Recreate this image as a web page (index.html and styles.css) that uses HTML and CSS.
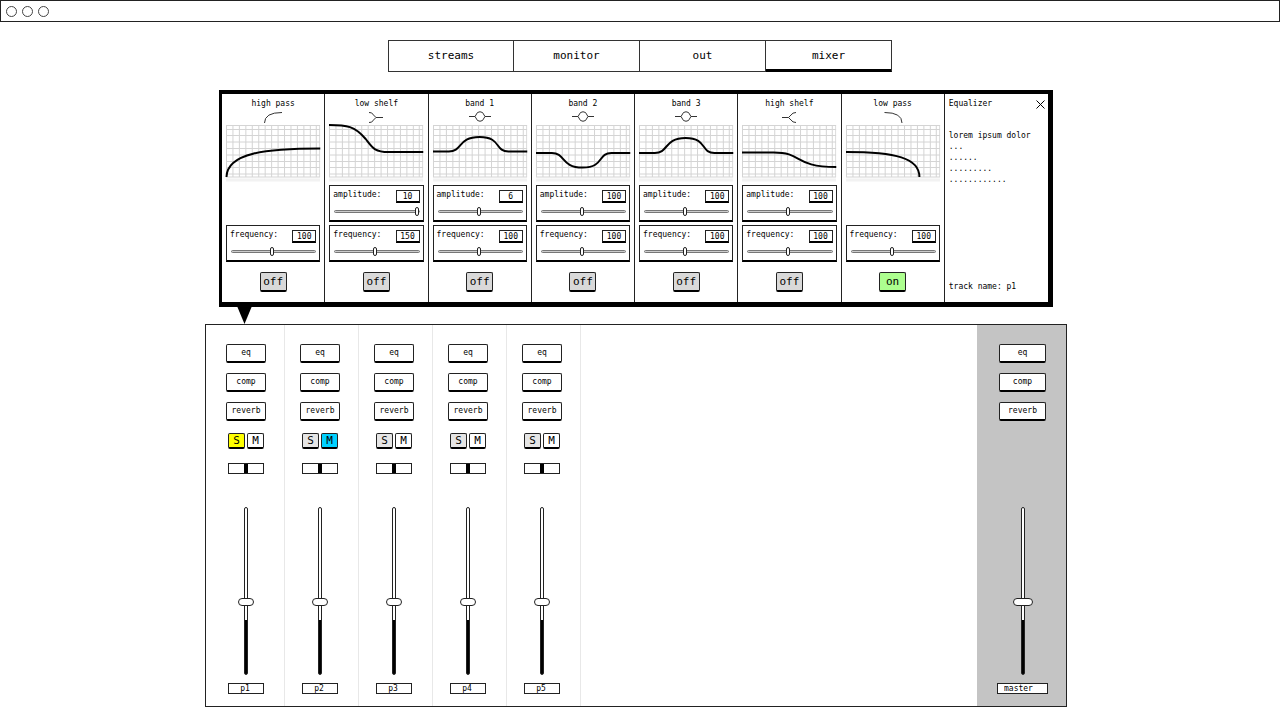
FILE: index.html
```html
<!DOCTYPE html>
<html lang="en">
<head>
<meta charset="utf-8">
<meta name="viewport" content="width=device-width, initial-scale=1">
<title>Mixer</title>
<link rel="stylesheet" href="styles.css">
</head>
<body>
<svg class="defs" aria-hidden="true">
  <symbol id="grid" viewBox="0 0 95 57" preserveAspectRatio="none">
    <path d="M0 55H95" stroke="#f2f2f2" stroke-width="3"/>
    <path d="M.5 0V52M7 0V52M13.5 0V52M20 0V52M26.500 0V52M33 0V52M39.500 0V52M46 0V52M52.500 0V52M59 0V52M65.500 0V52M72 0V52M78.500 0V52M85 0V52M91 0V52M94.500 0V52M0 .5H95M0 4.500H95M0 10.500H95M0 17H95M0 23.500H95M0 30H95M0 36.500H95M0 42.500H95M0 49H95M0 52H95" fill="none" stroke="#d4d4d4"/>
  </symbol>
  <symbol id="bell" viewBox="0 0 24 13">
    <path d="M1 5.500H7M17 5.500H23M7 5.500L9.500 1.500Q12 0 14.500 1.500L17 5.500L14.500 9.500Q12 11 9.500 9.500Z" fill="none" stroke="#333"/>
  </symbol>
</svg>

<header class="titlebar">
  <button class="dot" aria-label="Close window"></button>
  <button class="dot" aria-label="Minimize window"></button>
  <button class="dot" aria-label="Maximize window"></button>
</header>

<nav class="tabs">
  <a class="tab" href="#streams">streams</a>
  <a class="tab" href="#monitor">monitor</a>
  <a class="tab" href="#out">out</a>
  <a class="tab tab-active" href="#mixer" aria-current="page">mixer</a>
</nav>

<main class="workspace">
  <section class="equalizer" aria-label="Equalizer">
    <div class="band">
      <h2 class="band-name">high pass</h2>
      <svg class="band-icon" viewBox="0 0 24 13"><path d="M3.500 12Q3.500 1.500 21 1.500" fill="none" stroke="#333"/></svg>
      <svg class="graph" viewBox="0 0 95 57" preserveAspectRatio="none"><use href="#grid"/><path class="curve" d="M.5 52C1 28 40 23.500 95 23.500"/></svg>
      <div class="controls">
        <div class="param"><label class="param-name" for="f1">frequency:</label><input class="value" aria-label="frequency value" value="100"><input class="slider" id="f1" type="range" value="48"></div>
      </div>
      <button class="power">off</button>
    </div>
    <div class="band">
      <h2 class="band-name">low shelf</h2>
      <svg class="band-icon" viewBox="0 0 24 13"><path d="M5 1.500Q8 1 9.500 4L12 6.500H19M5 11.500Q8 12 9.500 9L12 6.500" fill="none" stroke="#333"/></svg>
      <svg class="graph" viewBox="0 0 95 57" preserveAspectRatio="none"><use href="#grid"/><path class="curve" d="M0 0C18 0 26 1 37 14C44 23 46 27 60 27H95"/></svg>
      <div class="controls">
        <div class="param"><label class="param-name" for="a2">amplitude:</label><input class="value" aria-label="amplitude value" value="10"><input class="slider" id="a2" type="range" value="100"></div>
        <div class="param"><label class="param-name" for="f2">frequency:</label><input class="value" aria-label="frequency value" value="150"><input class="slider" id="f2" type="range" value="48"></div>
      </div>
      <button class="power">off</button>
    </div>
    <div class="band">
      <h2 class="band-name">band 1</h2>
      <svg class="band-icon"><use href="#bell"/></svg>
      <svg class="graph" viewBox="0 0 95 57" preserveAspectRatio="none"><use href="#grid"/><path class="curve" d="M0 26.500H16C30 26.500 25 12 47 12S62 26.500 76 26.500H95"/></svg>
      <div class="controls">
        <div class="param"><label class="param-name" for="a3">amplitude:</label><input class="value" aria-label="amplitude value" value="6"><input class="slider" id="a3" type="range" value="48"></div>
        <div class="param"><label class="param-name" for="f3">frequency:</label><input class="value" aria-label="frequency value" value="100"><input class="slider" id="f3" type="range" value="48"></div>
      </div>
      <button class="power">off</button>
    </div>
    <div class="band">
      <h2 class="band-name">band 2</h2>
      <svg class="band-icon"><use href="#bell"/></svg>
      <svg class="graph" viewBox="0 0 95 57" preserveAspectRatio="none"><use href="#grid"/><path class="curve" d="M0 28H16C30 28 25 42.500 47 42.500S62 28 76 28H95"/></svg>
      <div class="controls">
        <div class="param"><label class="param-name" for="a4">amplitude:</label><input class="value" aria-label="amplitude value" value="100"><input class="slider" id="a4" type="range" value="48"></div>
        <div class="param"><label class="param-name" for="f4">frequency:</label><input class="value" aria-label="frequency value" value="100"><input class="slider" id="f4" type="range" value="48"></div>
      </div>
      <button class="power">off</button>
    </div>
    <div class="band">
      <h2 class="band-name">band 3</h2>
      <svg class="band-icon"><use href="#bell"/></svg>
      <svg class="graph" viewBox="0 0 95 57" preserveAspectRatio="none"><use href="#grid"/><path class="curve" d="M0 28H16C30 28 25 13 47 13S62 28 76 28H95"/></svg>
      <div class="controls">
        <div class="param"><label class="param-name" for="a5">amplitude:</label><input class="value" aria-label="amplitude value" value="100"><input class="slider" id="a5" type="range" value="48"></div>
        <div class="param"><label class="param-name" for="f5">frequency:</label><input class="value" aria-label="frequency value" value="100"><input class="slider" id="f5" type="range" value="48"></div>
      </div>
      <button class="power">off</button>
    </div>
    <div class="band">
      <h2 class="band-name">high shelf</h2>
      <svg class="band-icon" viewBox="0 0 24 13"><path d="M5 6.500H11.500L14 4Q15.500 1.500 19 1.500M11.500 6.500L14 9Q15.500 11.500 19 11.500" fill="none" stroke="#333"/></svg>
      <svg class="graph" viewBox="0 0 95 57" preserveAspectRatio="none"><use href="#grid"/><path class="curve" d="M0 27.500H32C62 27.500 52 42 95 42"/></svg>
      <div class="controls">
        <div class="param"><label class="param-name" for="a6">amplitude:</label><input class="value" aria-label="amplitude value" value="100"><input class="slider" id="a6" type="range" value="48"></div>
        <div class="param"><label class="param-name" for="f6">frequency:</label><input class="value" aria-label="frequency value" value="100"><input class="slider" id="f6" type="range" value="48"></div>
      </div>
      <button class="power">off</button>
    </div>
    <div class="band">
      <h2 class="band-name">low pass</h2>
      <svg class="band-icon" viewBox="0 0 24 13"><path d="M3.500 1.500Q21 1.500 21 12" fill="none" stroke="#333"/></svg>
      <svg class="graph" viewBox="0 0 95 57" preserveAspectRatio="none"><use href="#grid"/><path class="curve" d="M0 27C50 27 74 33 74 52"/></svg>
      <div class="controls">
        <div class="param"><label class="param-name" for="f7">frequency:</label><input class="value" aria-label="frequency value" value="100"><input class="slider" id="f7" type="range" value="48"></div>
      </div>
      <button class="power power-on">on</button>
    </div>
    <div class="info">
      <div class="info-head">
        <h2 class="info-title">Equalizer</h2>
        <button class="close" aria-label="Close equalizer"><svg class="close-icon" viewBox="0 0 9 9"><path d="M.5 .5L8.500 8.500M8.500 .5L.5 8.500" stroke="#000" fill="none"/></svg></button>
      </div>
      <p class="info-text">lorem ipsum dolor<br>...<br>......<br>.........<br>............</p>
      <p class="info-track">track name: p1</p>
    </div>
    <svg class="pointer" viewBox="0 0 15 18" aria-hidden="true"><path d="M0 0H15L7.500 18Z"/></svg>
  </section>

  <section class="mixer" id="mixer" aria-label="Mixer">
    <div class="channels">
      <div class="channel">
        <div class="effects"><button class="effect">eq</button><button class="effect">comp</button><button class="effect">reverb</button></div>
        <div class="switches"><button class="switch switch-solo-on">S</button><button class="switch">M</button></div>
        <input class="pan" type="range" aria-label="p1 pan">
        <input class="fader" type="range" value="43" aria-label="p1 volume">
        <input class="name" aria-label="Track name" value="p1">
      </div>
      <div class="channel">
        <div class="effects"><button class="effect">eq</button><button class="effect">comp</button><button class="effect">reverb</button></div>
        <div class="switches"><button class="switch switch-solo">S</button><button class="switch switch-mute-on">M</button></div>
        <input class="pan" type="range" aria-label="p2 pan">
        <input class="fader" type="range" value="43" aria-label="p2 volume">
        <input class="name" aria-label="Track name" value="p2">
      </div>
      <div class="channel">
        <div class="effects"><button class="effect">eq</button><button class="effect">comp</button><button class="effect">reverb</button></div>
        <div class="switches"><button class="switch switch-solo">S</button><button class="switch">M</button></div>
        <input class="pan" type="range" aria-label="p3 pan">
        <input class="fader" type="range" value="43" aria-label="p3 volume">
        <input class="name" aria-label="Track name" value="p3">
      </div>
      <div class="channel">
        <div class="effects"><button class="effect">eq</button><button class="effect">comp</button><button class="effect">reverb</button></div>
        <div class="switches"><button class="switch switch-solo">S</button><button class="switch">M</button></div>
        <input class="pan" type="range" aria-label="p4 pan">
        <input class="fader" type="range" value="43" aria-label="p4 volume">
        <input class="name" aria-label="Track name" value="p4">
      </div>
      <div class="channel">
        <div class="effects"><button class="effect">eq</button><button class="effect">comp</button><button class="effect">reverb</button></div>
        <div class="switches"><button class="switch switch-solo">S</button><button class="switch">M</button></div>
        <input class="pan" type="range" aria-label="p5 pan">
        <input class="fader" type="range" value="43" aria-label="p5 volume">
        <input class="name" aria-label="Track name" value="p5">
      </div>
    </div>
    <div class="channel master">
      <div class="effects"><button class="effect">eq</button><button class="effect">comp</button><button class="effect">reverb</button></div>
      <input class="fader" type="range" value="43" aria-label="master volume">
      <input class="name" aria-label="Track name" value="master">
    </div>
  </section>
</main>
</body>
</html>
```
FILE: styles.css
```css
* {
  box-sizing: border-box;
}

body {
  margin: 0;
  background: #fff;
  color: #000;
  font: 8px/12px "DejaVu Sans Mono", monospace;
}

button,
input {
  margin: 0;
  padding: 0;
  font: inherit;
  color: inherit;
  background: #fff;
  border: 1px solid #222;
  border-radius: 0;
}

h2,
p {
  margin: 0;
  font: inherit;
}

.defs {
  display: none;
}

/* Window title bar */

.titlebar {
  display: flex;
  align-items: center;
  gap: 5px;
  height: 22px;
  padding: 0 5px;
  border: 1px solid #222;
}

.dot {
  width: 11px;
  height: 11px;
  border-color: #444;
  border-radius: 50%;
}

/* Tabs */

.tabs {
  display: grid;
  grid-template-columns: repeat(4, 126px);
  justify-content: center;
  margin: 18px 0;
}

.tab {
  display: flex;
  align-items: center;
  justify-content: center;
  height: 32px;
  border: 1px solid #333;
  border-left-width: 0;
  color: #000;
  font-size: 11px;
  text-decoration: none;
}

.tab:first-child {
  border-left-width: 1px;
}

.tab-active {
  box-shadow: inset 0 -2px #000;
  border-bottom-color: #000;
}

/* Layout of the two panels */

.workspace {
  display: flex;
  flex-direction: column;
  gap: 17px;
  padding: 0 213px 13px 205px;
}

/* Equalizer */

.equalizer {
  position: relative;
  display: grid;
  grid-template-columns: repeat(8, minmax(0, 1fr));
  margin: 0 14px;
  border: solid #000;
  border-width: 4px 5px 5px 3px;
}

.band {
  display: flex;
  flex-direction: column;
  align-items: center;
  padding: 4px 4px 10px;
  border-right: 1px solid #222;
}

.band-icon {
  width: 24px;
  height: 13px;
  margin: 1px 0;
}

.graph {
  width: 100%;
  height: 57px;
  overflow: visible;
}

.curve {
  fill: none;
  stroke: #000;
  stroke-width: 2;
}

.controls {
  display: flex;
  flex-direction: column;
  justify-content: flex-end;
  gap: 3px;
  width: 100%;
  min-height: 77px;
  margin: 3px 0 10px;
}

.param {
  display: grid;
  grid-template-columns: 1fr 24px;
  align-content: start;
  height: 37px;
  padding: 4px 3px 0;
  border: 1px solid #222;
  border-bottom: 2px solid #000;
}

.param-name {
  line-height: 9px;
}

.value {
  width: 24px;
  height: 13px;
  border-bottom: 2px solid #000;
  text-align: center;
}

.slider {
  grid-column: 1 / -1;
  width: auto;
  height: 9px;
  margin: 4px 0 0 1px;
  border: 0;
  background: none;
  appearance: none;
}

.slider::-webkit-slider-runnable-track {
  height: 3px;
  border: 1px solid #777;
  border-radius: 2px;
  background: #ccc;
}

.slider::-webkit-slider-thumb {
  width: 4px;
  height: 9px;
  margin-top: -4px;
  border: 1px solid #222;
  border-radius: 2px;
  background: #fff;
  appearance: none;
}

.power {
  width: 27px;
  height: 20px;
  border-bottom: 2px solid #000;
  border-radius: 2px;
  background: #d9d9d9;
  font-size: 11px;
}

.power-on {
  background: #adff8f;
}

.info {
  display: flex;
  flex-direction: column;
  padding: 4px 3px 9px 4px;
}

.info-head {
  display: flex;
  align-items: center;
  justify-content: space-between;
}

.close {
  display: flex;
  border: 0;
}

.close-icon {
  width: 9px;
  height: 9px;
}

.info-text {
  margin-top: 20px;
  line-height: 11px;
}

.info-track {
  margin-top: auto;
}

.pointer {
  position: absolute;
  left: 15px;
  bottom: -22px;
  width: 15px;
  height: 18px;
}

/* Mixer */

.mixer {
  display: flex;
  justify-content: space-between;
  border: 1px solid #222;
}

.channels {
  display: flex;
  padding-left: 5px;
}

.channel {
  display: flex;
  flex-direction: column;
  align-items: center;
  width: 74px;
  padding: 19px 18px 12px 15px;
  border-right: 1px solid #e8e8e8;
}

.effects {
  display: flex;
  flex-direction: column;
  gap: 10px;
  width: 100%;
}

.effect {
  height: 19px;
  border-bottom: 2px solid #000;
  border-radius: 2px;
}

.switches {
  display: flex;
  gap: 2px;
  margin-top: 12px;
}

.switch {
  width: 17px;
  height: 16px;
  border-bottom: 2px solid #000;
  border-radius: 2px;
  font-size: 11px;
}

.switch-solo {
  background: #e5e5e5;
}

.switch-solo-on {
  background: #ff0;
}

.switch-mute-on {
  background: #00d1ff;
}

.pan {
  width: 36px;
  height: 11px;
  margin-top: 14px;
  appearance: none;
}

.pan::-webkit-slider-thumb {
  width: 4px;
  height: 9px;
  background: #000;
  appearance: none;
}

.fader {
  width: 16px;
  height: 168px;
  margin-top: 33px;
  border: 0;
  background: none;
  appearance: none;
  writing-mode: vertical-lr;
  direction: rtl;
}

.fader::-webkit-slider-runnable-track {
  width: 4px;
  border: 1px solid #222;
  border-radius: 2px;
  background: linear-gradient(#000, #000) bottom / 100% 54px no-repeat #fff;
}

.fader::-webkit-slider-thumb {
  width: 16px;
  height: 8px;
  margin-left: -7px;
  border: 1px solid #222;
  border-radius: 4px;
  background: #fff;
  appearance: none;
}

.name {
  width: 36px;
  height: 11px;
  margin-top: 8px;
  padding-right: 2px;
  text-align: center;
}

.master {
  width: 89px;
  padding: 19px 20px 12px 22px;
  border-right: 0;
  background: #c4c4c4;
}

.master .fader {
  width: 20px;
  margin-top: auto;
}

.master .fader::-webkit-slider-thumb {
  width: 20px;
  margin-left: -9px;
}

.master .name {
  width: 51px;
  padding: 0 0 0 6px;
  text-align: left;
}

@media (max-width: 1200px) {
  .workspace {
    padding-right: 16px;
    padding-left: 16px;
  }
}
```
